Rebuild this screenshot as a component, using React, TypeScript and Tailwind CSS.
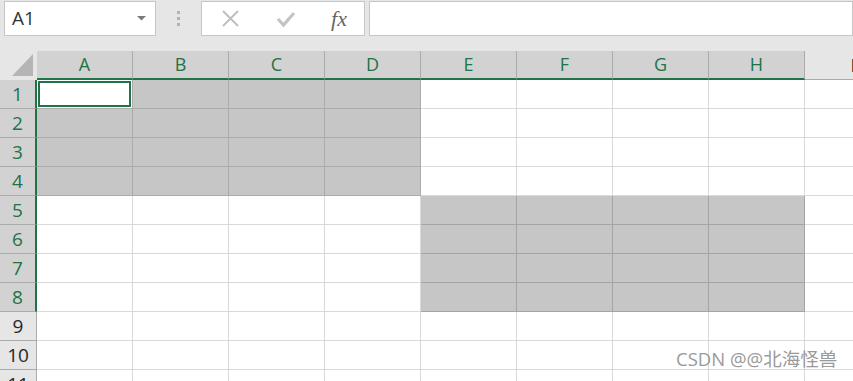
import React from "react";

const COLS = ["A", "B", "C", "D", "E", "F", "G", "H", "I"];
const ROWS = [1, 2, 3, 4, 5, 6, 7, 8, 9, 10, 11];

function Cell({ r, c }: { r: number; c: number }) {
  const grayA = r <= 4 && c <= 3;
  const grayE = r >= 5 && r <= 8 && c >= 4 && c <= 7;
  const isA1 = r === 1 && c === 0;
  if (isA1) {
    return (
      <div className="w-[96px] h-[29px] shrink-0 bg-white border-r border-b border-[#ababab] pl-[1px] pt-[1px] pr-[1px] pb-[1px]">
        <div className="w-full h-full border-2 border-[#217346] bg-white" />
      </div>
    );
  }
  if (grayA) {
    return <div className="w-[96px] h-[29px] shrink-0 bg-[#c6c6c6] border-r border-b border-[#ababab]" />;
  }
  if (grayE) {
    return <div className="w-[96px] h-[29px] shrink-0 bg-[#c6c6c6] border-r border-b border-[#a5a5a5]" />;
  }
  return <div className="w-[96px] h-[29px] shrink-0 bg-white border-r border-b border-[#d9d9d9]" />;
}

export default function App() {
  return (
    <div
      className="w-[853px] h-[381px] overflow-hidden bg-white relative"
      style={{ fontFamily: '"Open Sans", "Noto Sans", "Noto Sans CJK SC", sans-serif' }}
    >
      {/* toolbar */}
      <div className="h-[51px] bg-[#e6e6e6] flex items-start pt-[1px]">
        <div className="ml-[4px] w-[152px] h-[35px] bg-white border border-[#c6c6c6] flex items-center justify-between pl-[7px] pr-[9px] shrink-0">
          <span className="text-[19px] text-[#333] leading-none">A1</span>
          <svg width="9" height="5" viewBox="0 0 9 5">
            <path d="M0 0 L9 0 L4.5 4.5 Z" fill="#7a7a7a" />
          </svg>
        </div>
        <div className="w-[45px] h-[35px] flex flex-col items-center justify-center gap-[3px] shrink-0">
          <div className="w-[3px] h-[3px] bg-[#b3b3b3]" />
          <div className="w-[3px] h-[3px] bg-[#b3b3b3]" />
          <div className="w-[3px] h-[3px] bg-[#b3b3b3]" />
        </div>
        <div className="w-[164px] h-[35px] bg-white border border-[#c6c6c6] flex items-center shrink-0">
          <div className="w-[56px] flex justify-center pl-[1px]">
            <svg width="19" height="19" viewBox="0 0 19 19">
              <path d="M2 2 L17 17 M17 2 L2 17" stroke="#bdbdbd" strokeWidth="1.8" fill="none" />
            </svg>
          </div>
          <div className="w-[56px] flex justify-center">
            <svg width="20" height="18" viewBox="0 0 20 18">
              <path d="M2 9 L7.5 15 L18 3" stroke="#c4c4c4" strokeWidth="3.2" fill="none" />
            </svg>
          </div>
          <div className="w-[50px] flex justify-center">
            <span
              className="text-[22px] italic text-[#666] leading-none"
              style={{ fontFamily: '"Liberation Serif", "DejaVu Serif", serif' }}
            >
              fx
            </span>
          </div>
        </div>
        <div className="ml-[4px] flex-1 h-[35px] bg-white border border-[#c6c6c6]" />
      </div>

      {/* header row */}
      <div className="flex h-[29px]">
        <div className="w-[37px] h-[29px] shrink-0 bg-[#e6e6e6] relative">
          <svg className="absolute left-[12px] top-[3px]" width="22" height="22" viewBox="0 0 22 22">
            <path d="M21 0 L21 22 L0 22 Z" fill="#b5b5b5" />
          </svg>
        </div>
        {COLS.map((c, i) =>
          i < 8 ? (
            <div
              key={c}
              className="w-[96px] h-[29px] shrink-0 bg-[#d2d2d2] border-r border-[#ababab] border-b-2 border-b-[#217346] flex items-center justify-center text-[18px] text-[#217346]"
            >
              {c}
            </div>
          ) : (
            <div
              key={c}
              className="w-[96px] h-[29px] shrink-0 bg-[#e6e6e6] border-b border-b-[#ababab] flex items-center justify-center text-[18px] text-[#262626]"
            >
              {c}
            </div>
          )
        )}
      </div>

      {/* rows */}
      {ROWS.map((r) => (
        <div key={r} className="flex h-[29px]">
          {r <= 8 ? (
            <div className="w-[37px] h-[29px] shrink-0 bg-[#d2d2d2] border-b border-[#ababab] border-r-2 border-r-[#217346] flex items-center justify-center text-[19px] text-[#217346]">
              {r}
            </div>
          ) : (
            <div className="w-[37px] h-[29px] shrink-0 bg-[#e6e6e6] border-b border-[#ababab] border-r border-r-[#ababab] flex items-center justify-center text-[19px] text-[#262626]">
              {r}
            </div>
          )}
          {COLS.map((c, i) => (
            <Cell key={c} r={r} c={i} />
          ))}
        </div>
      ))}

      <div className="absolute left-[676px] top-[350px] text-[18.5px] text-[#9a9a9a] leading-none whitespace-nowrap">
        CSDN @@北海怪兽
      </div>
    </div>
  );
}
